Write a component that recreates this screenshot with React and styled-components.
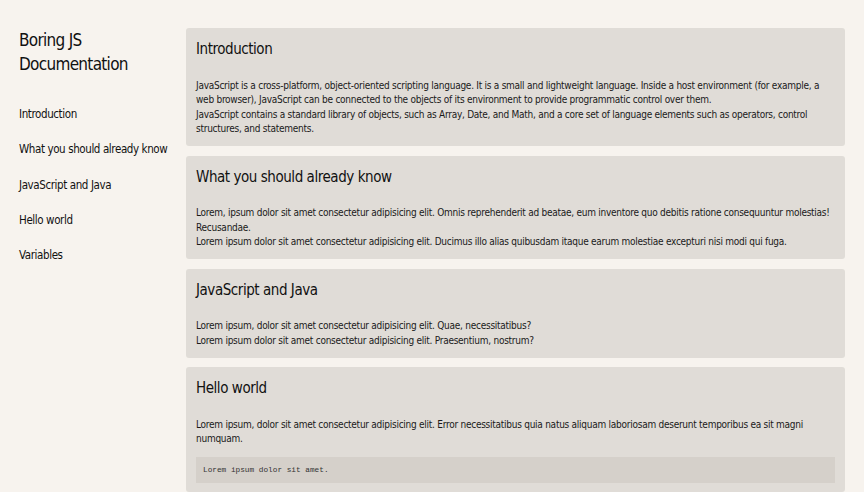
import styled, { createGlobalStyle } from "styled-components";

const GlobalStyle = createGlobalStyle`
  html, body {
    margin: 0;
    padding: 0;
    background-color: #f7f3ee;
  }

  body {
    font-family: "DejaVu Sans Condensed", "DejaVu Sans", sans-serif;
    color: #111;
  }
`;

const Page = styled.div`
  display: grid;
  grid-template-columns: 186px 1fr;
  padding: 28px 19px 0 0;
  min-height: 492px;
  box-sizing: border-box;
`;

const Sidebar = styled.nav`
  padding-left: 19px;
  display: flex;
  flex-direction: column;
`;

const Brand = styled.h1`
  margin: 0 0 31px;
  font-size: 17px;
  line-height: 24px;
  font-weight: 400;
  letter-spacing: -0.7px;
`;

const NavList = styled.ul`
  list-style: none;
  margin: 0;
  padding: 0;
  display: flex;
  flex-direction: column;
  gap: 20.3px;
`;

const NavLink = styled.a`
  display: block;
  font-size: 11.5px;
  line-height: 15px;
  letter-spacing: -0.4px;
  color: #111;
  text-decoration: none;
`;

const Main = styled.main`
  display: flex;
  flex-direction: column;
  gap: 9.5px;
`;

const Section = styled.section`
  background-color: #e0dcd7;
  border-radius: 3px;
  padding: 10px 10px 9.25px;
`;

const Title = styled.h2`
  margin: 0 0 18.75px;
  font-size: 15px;
  line-height: 22px;
  font-weight: 400;
  letter-spacing: -0.45px;
`;

const Text = styled.p`
  margin: 0;
  font-size: 10px;
  line-height: 14.5px;
  letter-spacing: -0.26px;
  color: #1a1a1a;
`;

const Code = styled.pre`
  margin: 10px 0 0;
  padding: 0 7px;
  background-color: #d5d0ca;
  font-family: "Liberation Mono", monospace;
  font-size: 7.75px;
  line-height: 26px;
  color: #333;
`;

const navItems = [
  "Introduction",
  "What you should already know",
  "JavaScript and Java",
  "Hello world",
  "Variables",
];

const sections = [
  {
    title: "Introduction",
    lines: [
      "JavaScript is a cross-platform, object-oriented scripting language. It is a small and lightweight language. Inside a host environment (for example, a web browser), JavaScript can be connected to the objects of its environment to provide programmatic control over them.",
      "JavaScript contains a standard library of objects, such as Array, Date, and Math, and a core set of language elements such as operators, control structures, and statements.",
    ],
  },
  {
    title: "What you should already know",
    lines: [
      "Lorem, ipsum dolor sit amet consectetur adipisicing elit. Omnis reprehenderit ad beatae, eum inventore quo debitis ratione consequuntur molestias! Recusandae.",
      "Lorem ipsum dolor sit amet consectetur adipisicing elit. Ducimus illo alias quibusdam itaque earum molestiae excepturi nisi modi qui fuga.",
    ],
  },
  {
    title: "JavaScript and Java",
    lines: [
      "Lorem ipsum, dolor sit amet consectetur adipisicing elit. Quae, necessitatibus?",
      "Lorem ipsum dolor sit amet consectetur adipisicing elit. Praesentium, nostrum?",
    ],
  },
  {
    title: "Hello world",
    lines: [
      "Lorem ipsum, dolor sit amet consectetur adipisicing elit. Error necessitatibus quia natus aliquam laboriosam deserunt temporibus ea sit magni numquam.",
    ],
    code: "Lorem ipsum dolor sit amet.",
  },
];

function App() {
  return (
    <>
      <GlobalStyle />
      <Page>
        <Sidebar>
          <Brand>Boring JS Documentation</Brand>
          <NavList>
            {navItems.map((item) => (
              <li key={item}>
                <NavLink href={`#${item}`}>{item}</NavLink>
              </li>
            ))}
          </NavList>
        </Sidebar>
        <Main>
          {sections.map((s) => (
            <Section key={s.title} id={s.title}>
              <Title>{s.title}</Title>
              {s.lines.map((line, i) => (
                <Text key={i}>{line}</Text>
              ))}
              {s.code && <Code>{s.code}</Code>}
            </Section>
          ))}
        </Main>
      </Page>
    </>
  );
}

export default App;
